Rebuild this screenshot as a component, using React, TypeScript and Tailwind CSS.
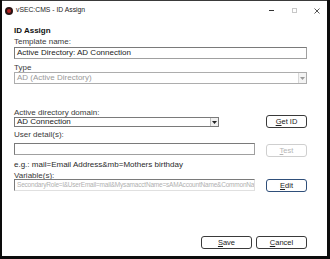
import React from "react";

const font = { fontFamily: '"Liberation Sans", Arial, sans-serif' };

function Btn({ u, rest, kind }: { u: string; rest: string; kind: "normal" | "focus" | "disabled" }) {
  const cls =
    kind === "disabled"
      ? "border-[#cfcfcf] text-[#b5b5b5]"
      : kind === "focus"
      ? "border-[#2f4f7a] border-[1.5px] text-[#222]"
      : "border-[#3a3a3a] text-[#222]";
  return (
    <div className={`h-[13px] flex items-center justify-center rounded-[3px] border bg-white text-[7.5px] ${cls}`}>
      <span>
        <span className="underline">{u}</span>
        {rest}
      </span>
    </div>
  );
}

function Arrow({ light }: { light?: boolean }) {
  return (
    <div className={`w-[8px] h-full flex items-center justify-center border-l ${light ? "border-[#d8d8d8] bg-[#f4f4f4]" : "border-[#bdbdbd] bg-[#f0f0f0]"}`}>
      <svg width="5" height="3" viewBox="0 0 5 3">
        <path d="M0 0 L5 0 L2.5 3 Z" fill={light ? "#9a9a9a" : "#222"} />
      </svg>
    </div>
  );
}

export default function App() {
  return (
    <div className="w-[330px] h-[259px] bg-[#0c0c0c] pl-[2px] pr-[3px] pb-[3px]" style={font}>
      <div className="h-[256px] bg-white border-t border-[#3a3a3a] flex flex-col text-[#1a1a1a]">
        {/* title bar */}
        <div className="h-[19px] flex items-center pl-[3px] pr-[7px]">
          <div className="w-[8px] h-[8px] rounded-full bg-[#2a1414] flex items-center justify-center">
            <div className="w-[4px] h-[4px] rounded-full bg-[#b02020]" />
          </div>
          <span className="ml-[3px] text-[6.8px] text-[#222]">vSEC:CMS - ID Assign</span>
          <div className="ml-auto flex items-center">
            <div className="w-[5px] h-px bg-[#333]" />
            <div className="ml-[18px] w-[5px] h-[5px] border border-[#c8c8c8]" />
            <svg className="ml-[17px]" width="6" height="6" viewBox="0 0 6 6">
              <path d="M0.5 0.5 L5.5 5.5 M5.5 0.5 L0.5 5.5" stroke="#444" strokeWidth="0.9" />
            </svg>
          </div>
        </div>

        <div className="flex flex-col pl-[12px] pr-[20px] text-[8px]">
          <div className="mt-[5px] h-[11px] flex items-center text-[8px] font-bold text-[#111]">ID Assign</div>
          <div className="mt-[1px] h-[9px] flex items-center text-[#3a3a3a]">Template name:</div>
          <div className="mt-[1px] h-[12px] border border-[#a0a0a0] border-t-[#7a7a7a] border-l-[#7a7a7a] flex items-center pl-[2px] text-[#222]">
            Active Directory: AD Connection
          </div>
          <div className="mt-[4px] h-[9px] flex items-center text-[#3a3a3a]">Type</div>
          <div className="h-[12px] border border-[#adadad] flex items-center text-[#9a9a9a]">
            <span className="pl-[2px] flex-1">AD (Active Directory)</span>
            <Arrow light />
          </div>

          <div className="mt-[24px] h-[9px] flex items-center text-[#3a3a3a]">Active directory domain:</div>
          <div className="flex items-end">
            <div className="w-[205px] h-[10px] border border-[#7a7a7a] flex items-center text-[#222] mb-[1px]">
              <span className="pl-[2px] flex-1">AD Connection</span>
              <Arrow />
            </div>
            <div className="ml-auto w-[41px] mt-[-5px]">
              <Btn u="G" rest="et ID" kind="normal" />
            </div>
          </div>

          <div className="mt-[2px] h-[10px] flex items-center text-[#3a3a3a]">User detail(s):</div>
          <div className="mt-[3px] flex items-start">
            <div className="w-[241px] h-[12px] border border-[#a0a0a0] border-t-[#7a7a7a] border-l-[#7a7a7a] bg-white" />
            <div className="ml-auto w-[41px] mt-[1px]">
              <Btn u="T" rest="est" kind="disabled" />
            </div>
          </div>
          <div className="mt-[3px] h-[9px] flex items-center text-[#2a2a2a]">e.g.: mail=Email Address&amp;mb=Mothers birthday</div>
          <div className="mt-[3px] h-[8px] flex items-center text-[#3a3a3a]">Variable(s):</div>
          <div className="mt-[-1px] flex items-start">
            <div className="w-[241px] h-[12px] border border-[#e0e0e0] border-t-[#7a7a7a] border-l-[#7a7a7a] flex items-center overflow-hidden whitespace-nowrap text-[6.5px] tracking-[-0.2px] text-[#b0b0b0] pl-[2px]">
              <span>SecondaryRole=l&amp;UserEmail=mail&amp;MysamacctName=sAMAccountName&amp;CommonNa</span>
            </div>
            <div className="ml-auto w-[41px]">
              <Btn u="E" rest="dit" kind="focus" />
            </div>
          </div>

          <div className="mt-[44px] flex justify-end gap-[4px]">
            <div className="w-[51px]">
              <Btn u="S" rest="ave" kind="normal" />
            </div>
            <div className="w-[51px]">
              <Btn u="C" rest="ancel" kind="normal" />
            </div>
          </div>
        </div>
      </div>
    </div>
  );
}
